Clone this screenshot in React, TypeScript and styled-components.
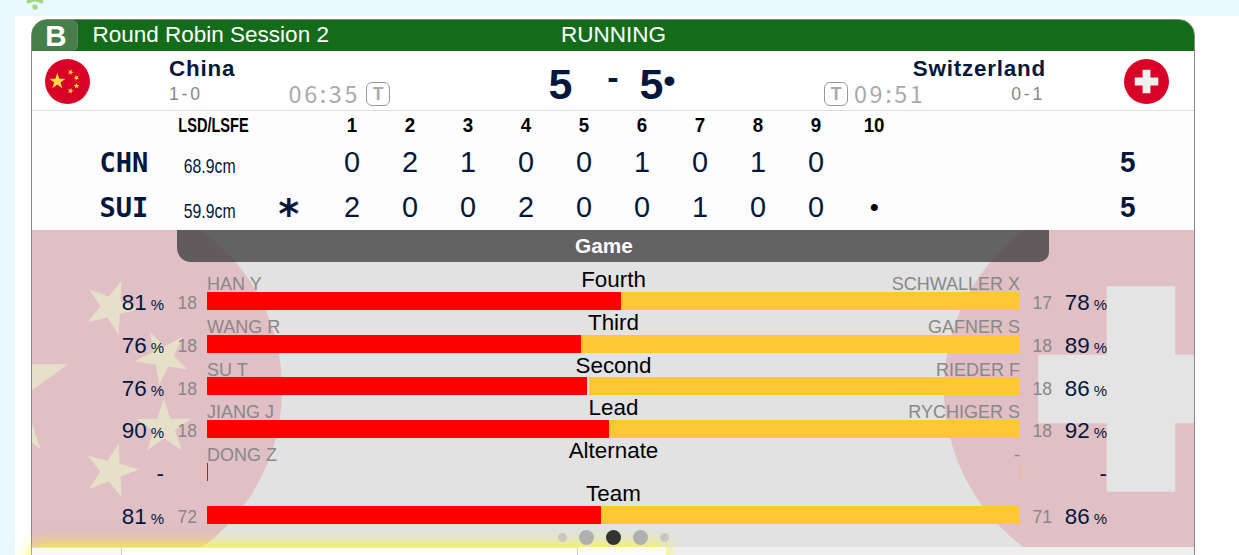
import styled, { createGlobalStyle } from "styled-components";

interface PlayerStat {
  position: string
  left: SideStat
  right: SideStat
  redWidth: number
  yellowWidth: number
}

interface SideStat {
  name: string
  percent: string
  count: string
}

interface LineScore {
  code: string
  lsd: string
  hammer: boolean
  ends: string[]
  total: string
}

const GlobalStyle = createGlobalStyle`
  * {
    box-sizing: border-box;
  }

  body {
    margin: 0;
    overflow: hidden;
    background: #eaf8ff;
    font-family: "Liberation Sans", Arial, sans-serif;
    color: #000;
  }
`;

const Page = styled.div`
  height: 555px;
  padding-left: 15px;
  overflow: hidden;
`;

const TopStrip = styled.div`
  height: 16px;
  padding-left: 11px;

  svg {
    display: block;
  }
`;

const Content = styled.main`
  height: 539px;
  padding: 3px 0 0 16px;
  background: #fff;
`;

const Card = styled.section`
  width: 1164px;
  height: 700px;
  border: 1px solid #888;
  border-radius: 16px 16px 0 0;
`;

const CardHeader = styled.header`
  display: grid;
  grid-template-columns: 46px 483px 106px 1fr;
  height: 31px;

  border-radius: 15px 15px 0 0;
  background: #146c1a;
  color: #fff;
  font-size: 22.5px;
  line-height: 30px;
  white-space: nowrap;
`;

const Sheet = styled.span`
  height: 31px;
  padding-left: 3px;
  border-right: 1px solid #777;
  border-radius: 15px 6px 6px 0;
  background: #467f4a;
  font-size: 29.5px;
  font-weight: bold;
  line-height: 31px;
  text-align: center;
`;

const Session = styled.span`
  padding-left: 14.5px;
`;

const TeamsBar = styled.div`
  display: flex;
  justify-content: space-between;
  height: 60px;

  border-bottom: 1px solid #ddd;
  background: #fff;
`;

const Team = styled.div<{ $right?: boolean }>`
  display: flex;
  flex-direction: ${props => props.$right ? "row-reverse" : "row"};
  gap: ${props => props.$right ? "78px" : "79px"};
  padding: ${props => props.$right ? "0 25px 0 0" : "0 0 0 13px"};

  svg {
    margin-top: 8px;
  }
`;

const TeamInfo = styled.div<{ $right?: boolean }>`
  display: flex;
  flex-direction: column;
  align-items: ${props => props.$right ? "flex-end" : "flex-start"};
  width: ${props => props.$right ? "222px" : "221px"};
  padding-top: 4px;
`;

const TeamName = styled.div`
  color: #02173b;
  font-size: 22.4px;
  font-weight: bold;
  letter-spacing: 0.8px;
  line-height: 28px;
`;

const TeamDetails = styled.div<{ $right?: boolean }>`
  display: flex;
  justify-content: space-between;
  align-items: center;
  width: 100%;
  height: 22px;
  padding-right: ${props => props.$right ? "1px" : "0"};
`;

const Record = styled.span`
  color: #888;
  font-size: 17.6px;
  letter-spacing: 2.8px;
  line-height: 22px;
`;

const Clock = styled.span`
  display: flex;
  align-items: center;
  gap: 6px;
`;

const ClockTime = styled.span`
  padding-bottom: 3px;
  color: #aaa;
  font-family: "Noto Sans CJK SC", sans-serif;
  font-size: 23.4px;
  letter-spacing: 2.6px;
  line-height: 24px;
`;

const TimeoutBadge = styled.span`
  width: 24px;
  height: 24px;
  border: 1px solid #999;
  border-radius: 6px;

  color: #aaa;
  font-size: 17.6px;
  font-weight: bold;
  line-height: 23px;
  text-align: center;
`;

const GameScore = styled.div`
  display: grid;
  grid-template-columns: 24px 67px 24px 14px;
  align-items: center;
  padding-left: 12px;

  color: #02173b;
  font-size: 43px;
  font-weight: bold;
  line-height: 66px;
`;

const ScoreDash = styled.span`
  padding: 0 0 15px 14px;
  font-size: 34px;
  line-height: 50px;
  text-align: center;
`;

const HammerDot = styled.span`
  padding-bottom: 9px;
  font-size: 34px;
  line-height: 50px;
`;

const ScoreTable = styled.div`
  background: #fdfdfd;
`;

const ScoreRow = styled.div<{ $head?: boolean }>`
  display: grid;
  grid-template-columns: 145px 73px 72.5px repeat(10, 58.1px) 1fr;
  align-items: center;
  height: ${props => props.$head ? "29px" : "45px"};

  color: ${props => props.$head ? "#000" : "#02173b"};
  font-size: ${props => props.$head ? "20.8px" : "30.4px"};
  font-weight: ${props => props.$head ? "bold" : "normal"};
  line-height: ${props => props.$head ? "27px" : "45px"};
  text-align: center;
`;

const TeamCode = styled.span`
  padding-left: 39px;
  font-family: "DejaVu Sans Mono", monospace;
  font-size: 27px;
  font-weight: bold;
`;

const Condensed = styled.span<{ $scale: number }>`
  display: flex;
  justify-content: center;
  transform: scaleX(${props => props.$scale});
`;

const HeadCell = styled(Condensed)`
  height: 29px;
`;

const EndScore = styled(Condensed)`
  height: 45px;
  line-height: 43px;
`;

const Lsd = styled(Condensed)`
  padding: 6px 10px 0 0;
  font-size: 20.8px;
  line-height: 39px;
`;

const Hammer = styled.span`
  height: 45px;
  padding: 8px 0 0 5px;
  font-family: "DejaVu Sans Mono", monospace;
  font-size: 40px;
  font-weight: bold;
  line-height: 43px;
`;

const Total = styled(EndScore)`
  padding-left: 173px;
  font-weight: bold;
`;

const EndMark = styled.span`
  color: #000;
  font-size: 26px;
`;

const StatsPanel = styled.div`
  position: relative;
  display: flex;
  flex-direction: column;
  align-items: center;
  height: 317px;
  overflow: hidden;
  background: #e2e2e2;
`;

const FlagBackdrop = styled.div<{ $side: "left" | "right" }>`
  position: absolute;
  top: -38.5px;
  ${props => props.$side}: -144px;
  opacity: 0.15;
`;

const StatsTitle = styled.h2`
  position: relative;
  flex-shrink: 0;
  width: 872px;
  height: 32px;
  margin: 0 0 5.1px;
  padding-right: 18px;

  border-radius: 0 0 10px 14px;
  background: rgba(56, 56, 56, 0.75);
  color: #fff;
  font-size: 20.8px;
  line-height: 31px;
  text-align: center;
`;

const StatRow = styled.div`
  position: relative;
  display: grid;
  grid-template-columns: 132px 33px 833px 22px 55px 1fr;
  width: 1162px;
  height: 42.75px;
  flex-shrink: 0;
`;

const Percent = styled.div`
  display: flex;
  align-items: baseline;
  justify-content: flex-end;
  gap: 4px;
  padding-top: 23px;

  color: #02173b;
  font-size: 22.4px;
  line-height: 26px;

  small {
    font-size: 15px;
  }
`;

const Count = styled.div`
  padding-top: 24px;
  color: #888;
  font-size: 17.6px;
  line-height: 24px;
  text-align: right;
`;

const Matchup = styled.div`
  margin-left: 10px;
  width: 813px;
`;

const MatchupLabels = styled.div`
  display: grid;
  grid-template-columns: 1fr auto 1fr;
  height: 24.8px;

  font-size: 22.4px;
  line-height: 25.6px;
`;

const PlayerName = styled.span<{ $right?: boolean }>`
  padding-top: 5px;
  color: #888;
  font-size: 18px;
  text-align: ${props => props.$right ? "right" : "left"};
`;

const Bars = styled.div`
  display: flex;
  justify-content: space-between;
  height: 18px;
`;

const Bar = styled.div<{ $color: string }>`
  height: 18px;
  background: ${props => props.$color};
`;

const Pager = styled.div`
  position: relative;
  z-index: 2;
  display: grid;
  flex-shrink: 0;
  grid-template-columns: 21px 27px 27px 27px 21px;
  justify-items: center;
  align-items: center;
  height: 28px;
`;

const PagerDot = styled.span<{ $size: number, $color: string }>`
  width: ${props => props.$size}px;
  height: ${props => props.$size}px;
  border-radius: 50%;
  background: ${props => props.$color};
`;

const NextSection = styled.div`
  display: flex;
  height: 300px;
  background: #efefef;
`;

const ActiveBox = styled.div`
  position: relative;
  display: grid;
  grid-template-columns: 90px 456px 1fr;
  width: 634px;
  margin-right: 9px;
  box-shadow: 0 0 16px #ff0;
  background: #fbfbfb;
`;

const ActiveCell = styled.div<{ $white?: boolean }>`
  border-top: 1px solid #e4e4e4;
  border-right: 1px solid #ccc;
  background: ${props => props.$white ? "#fff" : "#f9f9f9"};
`;

const IdleBox = styled.div`
  position: relative;
  flex-grow: 1;
  background: #efefef;
`;

const ends = ["1", "2", "3", "4", "5", "6", "7", "8", "9", "10"];

const lines: LineScore[] = [
  { code: "CHN", lsd: "68.9cm", hammer: false, ends: ["0", "2", "1", "0", "0", "1", "0", "1", "0", ""], total: "5" },
  { code: "SUI", lsd: "59.9cm", hammer: true, ends: ["2", "0", "0", "2", "0", "0", "1", "0", "0", "•"], total: "5" },
];

const stats: PlayerStat[] = [
  {
    position: "Fourth", redWidth: 414, yellowWidth: 399,
    left: { name: "HAN Y", percent: "81", count: "18" },
    right: { name: "SCHWALLER X", percent: "78", count: "17" },
  },
  {
    position: "Third", redWidth: 374, yellowWidth: 439,
    left: { name: "WANG R", percent: "76", count: "18" },
    right: { name: "GAFNER S", percent: "89", count: "18" },
  },
  {
    position: "Second", redWidth: 380, yellowWidth: 431,
    left: { name: "SU T", percent: "76", count: "18" },
    right: { name: "RIEDER F", percent: "86", count: "18" },
  },
  {
    position: "Lead", redWidth: 402, yellowWidth: 411,
    left: { name: "JIANG J", percent: "90", count: "18" },
    right: { name: "RYCHIGER S", percent: "92", count: "18" },
  },
  {
    position: "Alternate", redWidth: 1, yellowWidth: 1,
    left: { name: "DONG Z", percent: "", count: "" },
    right: { name: "-", percent: "", count: "" },
  },
  {
    position: "Team", redWidth: 394, yellowWidth: 419,
    left: { name: "", percent: "81", count: "72" },
    right: { name: "", percent: "86", count: "71" },
  },
];

const ChinaFlag = ({ size }: { size: number }) => (
  <svg width={size} height={size} viewBox="0 0 512 512">
    <circle cx="256" cy="256" r="256" fill="#d80027" />
    <g fill="#ffda44">
      <polygon points="140.1,155.8 198,333.9 46.5,223.8 233.7,223.8 82.2,333.9" />
      <polygon points="303.5,115.3 299.7,185.2 261.5,126.5 327,151.6 259.2,169.7" />
      <polygon points="340.5,182 352.5,250.5 383.5,188 320.5,220 389.5,231" />
      <polygon points="358,269 382,336 323,295 394,294.5 337,336" />
      <polygon points="303.5,396.7 299.7,326.8 261.5,385.5 327,360.4 259.2,342.3" />
    </g>
  </svg>
);

const SwissFlag = ({ size }: { size: number }) => (
  <svg width={size} height={size} viewBox="0 0 512 512">
    <circle cx="256" cy="256" r="256" fill="#d80027" />
    <polygon
      fill="#f0f0f0"
      points="389.6,211.5 300.5,211.5 300.5,122.4 211.5,122.4 211.5,211.5 122.4,211.5 122.4,300.5 211.5,300.5 211.5,389.6 300.5,389.6 300.5,300.5 389.6,300.5"
    />
  </svg>
);

const Signal = () => (
  <svg width="18" height="11" viewBox="0 0 18 11">
    <path d="M2.3 1.8 Q9 -2.4 15.7 1.8" fill="none" stroke="#9fd880" strokeWidth="3.4" strokeLinecap="round" />
    <circle cx="9" cy="7.1" r="2.7" fill="#9fd880" />
  </svg>
);

const PercentValue = ({ value }: { value: string }) => (
  <Percent>{value ? <>{value}<small>%</small></> : "-"}</Percent>
);

function Scoreboard() {
  return (
    <ScoreTable>
      <ScoreRow $head>
        <span />
        <HeadCell $scale={0.7}>LSD/LSFE</HeadCell>
        <span />
        {ends.map(end => (
          <HeadCell key={end} $scale={0.9}>{end}</HeadCell>
        ))}
      </ScoreRow>
      {lines.map(line => (
        <ScoreRow key={line.code}>
          <TeamCode>{line.code}</TeamCode>
          <Lsd $scale={0.76}>{line.lsd}</Lsd>
          <Hammer>{line.hammer ? "*" : ""}</Hammer>
          {line.ends.map((points, index) => (
            points === "•"
              ? <EndMark key={index}>•</EndMark>
              : <EndScore key={index} $scale={0.95}>{points}</EndScore>
          ))}
          <Total $scale={0.92}>{line.total}</Total>
        </ScoreRow>
      ))}
    </ScoreTable>
  );
}

function Stats() {
  return (
    <StatsPanel>
      <FlagBackdrop $side="left"><ChinaFlag size={394} /></FlagBackdrop>
      <FlagBackdrop $side="right"><SwissFlag size={394} /></FlagBackdrop>
      <StatsTitle>Game</StatsTitle>
      {stats.map(row => (
        <StatRow key={row.position}>
          <PercentValue value={row.left.percent} />
          <Count>{row.left.count}</Count>
          <Matchup>
            <MatchupLabels>
              <PlayerName>{row.left.name}</PlayerName>
              <span>{row.position}</span>
              <PlayerName $right>{row.right.name}</PlayerName>
            </MatchupLabels>
            <Bars>
              <Bar $color="#f00" style={{ width: row.redWidth }} />
              <Bar $color="#ffc733" style={{ width: row.yellowWidth }} />
            </Bars>
          </Matchup>
          <Count>{row.right.count}</Count>
          <PercentValue value={row.right.percent} />
        </StatRow>
      ))}
      <Pager>
        <PagerDot $size={9} $color="#c8c8bf" />
        <PagerDot $size={15} $color="#b0b0b0" />
        <PagerDot $size={15} $color="#333" />
        <PagerDot $size={15} $color="#b0b0b0" />
        <PagerDot $size={9} $color="#c8c8bf" />
      </Pager>
    </StatsPanel>
  );
}

function App() {
  return (
    <Page>
      <GlobalStyle />
      <TopStrip><Signal /></TopStrip>
      <Content>
        <Card>
          <CardHeader>
            <Sheet>B</Sheet>
            <Session>Round Robin Session 2</Session>
            <span>RUNNING</span>
          </CardHeader>
          <TeamsBar>
            <Team>
              <ChinaFlag size={45} />
              <TeamInfo>
                <TeamName>China</TeamName>
                <TeamDetails>
                  <Record>1-0</Record>
                  <Clock>
                    <ClockTime>06:35</ClockTime>
                    <TimeoutBadge>T</TimeoutBadge>
                  </Clock>
                </TeamDetails>
              </TeamInfo>
            </Team>
            <GameScore>
              <span>5</span>
              <ScoreDash>-</ScoreDash>
              <span>5</span>
              <HammerDot>•</HammerDot>
            </GameScore>
            <Team $right>
              <SwissFlag size={45} />
              <TeamInfo $right>
                <TeamName>Switzerland</TeamName>
                <TeamDetails $right>
                  <Clock>
                    <TimeoutBadge>T</TimeoutBadge>
                    <ClockTime>09:51</ClockTime>
                  </Clock>
                  <Record>0-1</Record>
                </TeamDetails>
              </TeamInfo>
            </Team>
          </TeamsBar>
          <Scoreboard />
          <Stats />
          <NextSection>
            <ActiveBox>
              <ActiveCell />
              <ActiveCell $white />
            </ActiveBox>
            <IdleBox />
          </NextSection>
        </Card>
      </Content>
    </Page>
  );
}

export default App
